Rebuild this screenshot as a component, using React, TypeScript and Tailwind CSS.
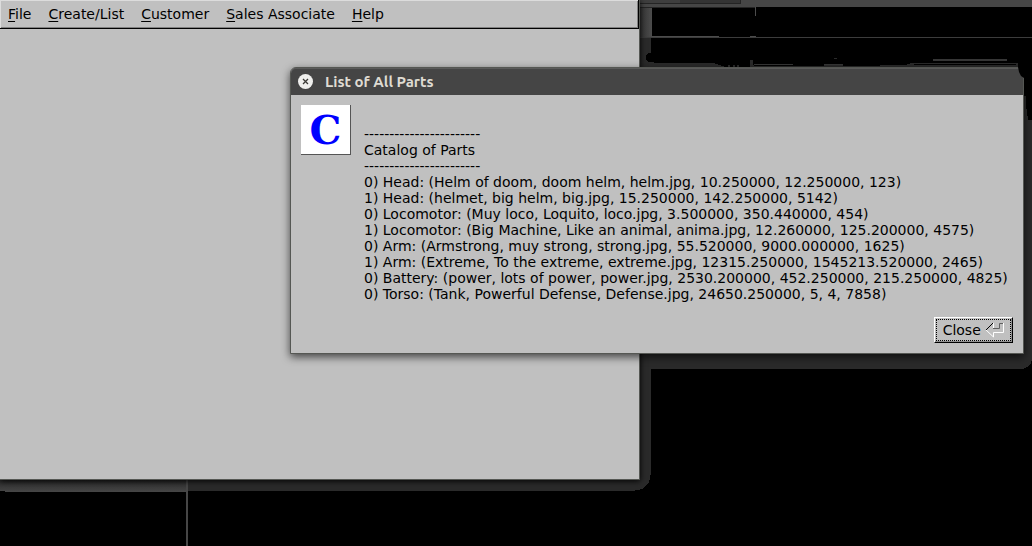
import React from 'react';

const menus = ['File', 'Create/List', 'Customer', 'Sales Associate', 'Help'];

const catalog = [
  '-----------------------',
  'Catalog of Parts',
  '-----------------------',
  '0) Head: (Helm of doom, doom helm, helm.jpg, 10.250000, 12.250000, 123)',
  '1) Head: (helmet, big helm, big.jpg, 15.250000, 142.250000, 5142)',
  '0) Locomotor: (Muy loco, Loquito, loco.jpg, 3.500000, 350.440000, 454)',
  '1) Locomotor: (Big Machine, Like an animal, anima.jpg, 12.260000, 125.200000, 4575)',
  '0) Arm: (Armstrong, muy strong, strong.jpg, 55.520000, 9000.000000, 1625)',
  '1) Arm: (Extreme, To the extreme, extreme.jpg, 12315.250000, 1545213.520000, 2465)',
  '0) Battery: (power, lots of power, power.jpg, 2530.200000, 452.250000, 215.250000, 4825)',
  '0) Torso: (Tank, Powerful Defense, Defense.jpg, 24650.250000, 5, 4, 7858)',
];

function Backdrop() {
  return (
    <svg
      aria-hidden="true"
      className="absolute left-0 top-0"
      width="1032"
      height="546"
      viewBox="0 0 1032 546"
      shapeRendering="crispEdges"
    >
      <defs>
        <linearGradient id="fade" x1="0" y1="0" x2="0" y2="1">
          <stop offset="0" stopColor="#2a2a2a" />
          <stop offset="1" stopColor="#464646" />
        </linearGradient>
        <linearGradient id="side" x1="0" y1="0" x2="1" y2="0">
          <stop offset="0" stopColor="#353535" />
          <stop offset="1" stopColor="#4c4c4c" />
        </linearGradient>
      </defs>
      <rect x="636" y="0" width="396" height="7" fill="#464646" />
      <rect x="636" y="0" width="44" height="3" fill="#3e3e3e" />
      <rect x="680" y="0" width="60" height="3" fill="#343434" />
      <path d="M640 3.5H741M740.5 0V4M640 7.5H755" stroke="#242424" />
      <rect x="640" y="8" width="12" height="30" fill="url(#side)" />
      <path d="M755.5 7V16" stroke="#4c4c4c" />
      <path d="M652 36.5H719M750 36.5H756" stroke="#4c4c4c" />
      <path d="M640 37.5H1032" stroke="#3c3c3c" />
      {/* window shadows */}
      <path
        d="M640 38H651V53H648L646 56V60L649 62H654V63H713L719 65H748L750 60H753V65H900L912 63H1018V70L1020 75L1024 78V96H1026V105L1028 120H1032V360Q1030 369 1020 369H651V473L649 482L642 489L633 491H0V360H640Z"
        fill="#2a2a2a"
      />
      <path d="M719 65H746L748 60H750V67H725L719 65Z" fill="#000" />
      <path d="M728.5 65V67M733.5 65V67M737.5 65V67" stroke="#2a2a2a" strokeWidth="2" />
      <path d="M754 60H912V63L905 65H754Z" fill="#000" />
      <path d="M754 65.5H824M843 65.5H880" stroke="#000" />
      <path d="M754 64.5H793M824 64.5H843" stroke="#363636" />
      <path d="M834 58.5H837" stroke="#2a2a2a" />
      <path d="M933 60H1007" stroke="#363636" strokeWidth="2" />
      <path d="M914 64.5H1016" stroke="#000" />
      <rect x="0" y="480" width="186" height="12" fill="url(#fade)" />
      <rect x="0" y="491" width="5" height="1" fill="#000" />
      <rect x="186" y="480" width="2" height="66" fill="#464646" />
    </svg>
  );
}

function MainWindow() {
  return (
    <main className="absolute left-0 top-0 flex h-120 w-160 flex-col border-b border-r border-[#555753] bg-[#c0c0c0] shadow-[0_1px_6px_#000]">
      <nav className="flex h-[29px] shrink-0 items-center border-b border-r border-black bg-[#c0c0c0] pl-1 shadow-[inset_1px_1px_0_#dcdcdc,inset_-1px_-1px_0_#808080]">
        {menus.map((name) => (
          <button key={name} type="button" className="mr-[9px] px-1 leading-4">
            <span className="underline underline-offset-2">{name[0]}</span>
            {name.slice(1)}
          </button>
        ))}
      </nav>
    </main>
  );
}

function PartsDialog() {
  return (
    <section
      role="dialog"
      aria-labelledby="dialog-title"
      className="absolute left-[290px] top-[67px] rounded-t-md border border-[#555753] bg-[#c0c0c0] shadow-[0_3px_9px_rgba(0,0,0,0.65)]"
    >
      <header className="flex h-[27px] items-center gap-[11px] rounded-t-[5px] bg-[#454545] px-[7px] shadow-[inset_0_1px_0_#5a5a5a]">
        <button type="button" aria-label="Close window" className="size-4">
          <svg viewBox="0 0 16 16" className="size-4">
            <circle cx="7.5" cy="7.5" r="7.5" fill="#efefed" />
            <path d="M5 5L10 10M10 5L5 10" stroke="#3c3b37" strokeWidth="1.3" />
          </svg>
        </button>
        <h1 id="dialog-title" className="font-[Ubuntu,'Noto_Sans',sans-serif] text-[15px] font-bold text-[#dfdbd2]">
          List of All Parts
        </h1>
      </header>
      <div className="flex gap-[13px] pl-[10px] pr-[15px] pt-[10px]">
        <div className="flex size-[50px] shrink-0 items-center justify-center border-b border-r border-[#555] bg-white font-['DejaVu_Serif',serif] text-[40px] font-bold leading-none text-[#00f]">
          C
        </div>
        <div className="whitespace-nowrap pt-[21px] leading-4">
          {catalog.map((line, i) => (
            <p key={i}>{line}</p>
          ))}
        </div>
      </div>
      <footer className="flex justify-end px-[10px] pb-[10px] pt-[15px]">
        <button
          type="button"
          className="border border-b-black border-l-white border-r-black border-t-white bg-[#c0c0c0] p-px shadow-[inset_-1px_-1px_0_#909090]"
        >
          <span className="flex h-[22px] items-center gap-1 border border-dotted border-black pl-[6px] pr-[5px]">
            Close
            <svg viewBox="0 0 20 16" className="h-4 w-5" fill="none">
              <path d="M1 8L8 1" stroke="#000" />
              <path d="M8 6.5H14.5V1.5H19" stroke="#606060" />
              <path d="M8.5 1V6M1 8L8.5 15V10.5H18.5V1" stroke="#fff" />
            </svg>
          </span>
        </button>
      </footer>
      <svg aria-hidden="true" className="absolute -right-px -top-px h-3 w-[6px]" viewBox="0 0 6 12">
        <path d="M0 0H6V11L3 9L1 5Z" fill="#000" />
      </svg>
    </section>
  );
}

export default function App() {
  return (
    <div className="relative min-h-screen overflow-hidden bg-black font-['DejaVu_Sans',sans-serif] text-sm text-black">
      <Backdrop />
      <MainWindow />
      <PartsDialog />
    </div>
  );
}
